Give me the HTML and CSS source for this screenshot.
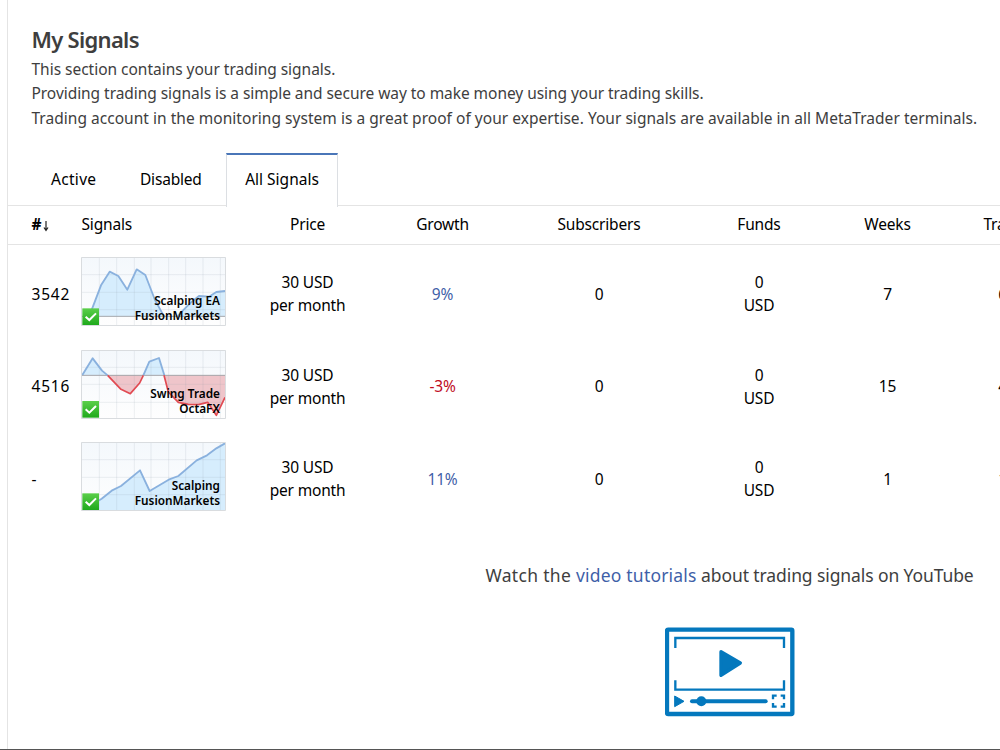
FILE: index.html
```
<!DOCTYPE html>
<html lang="en">
<head>
<meta charset="utf-8">
<title>My Signals</title>
<link rel="stylesheet" href="styles.css">
</head>
<body>
<main class="panel">
  <header class="intro">
    <h1 class="title">My Signals</h1>
    <p class="line l1">This section contains your trading signals.</p>
    <p class="line l2">Providing trading signals is a simple and secure way to make money using your trading skills.</p>
    <p class="line l3">Trading account in the monitoring system is a great proof of your expertise. Your signals are available in all MetaTrader terminals.</p>
  </header>
  <nav class="tabs">
    <a class="tab active-tab">Active</a>
    <a class="tab disabled-tab">Disabled</a>
    <a class="tab selected">All Signals</a>
  </nav>
  <section class="table">
    <div class="row head">
      <span class="left"><b>#</b><svg class="sort" viewBox="0 0 6 12"><path d="M3 1v9M1 7.500l2 3l2-3" fill="none" stroke="#222" stroke-width="1.200"/></svg></span>
      <span class="left">Signals</span><span>Price</span><span>Growth</span><span>Subscribers</span><span>Funds</span><span>Weeks</span><span>Trades</span>
    </div>
    <div class="row item">
      <span class="left rank">3542</span>
      <div class="thumb">
        <svg class="chart" viewBox="18 21 435 207">
          <defs>
            <linearGradient id="bg" x1="0" y1="0" x2="0" y2="1"><stop offset="0" stop-color="#f4f8fc"/><stop offset="1" stop-color="#fefefe"/></linearGradient>
            <linearGradient id="ok" x1="0" y1="0" x2="0" y2="1"><stop offset="0" stop-color="#5bcf4a"/><stop offset="1" stop-color="#1fa91c"/></linearGradient>
          </defs>
          <path d="M18 21h435v207H18z" fill="url(#bg)"/>
          <path d="M46 199V190L78 106L104 65L130 78L157 119L185 58L211 75L240 150L262 190V199H315V190L345 160L372 138L402 140L424 126L450 123V199Z" fill="#d6edfd"/>
          <path d="M73 21v207M125 21v207M178 21v207M228 21v207M281 21v207M332 21v207M384 21v207M436 21v207M18 74h435M18 127h435M18 179h435" stroke="#8e9aa6" stroke-opacity=".15" stroke-width="3"/>
          <path d="M18 199h435" stroke="#a4a8ac" stroke-width="3"/>
          <path d="M46 190L78 106L104 65L130 78L157 119L185 58L211 75L240 150L262 190L266 199M309 199L315 190L345 160L372 138L402 140L424 126L450 123" fill="none" stroke="#8ab1de" stroke-width="5.500" stroke-linejoin="round"/>
          <path d="M19.500 22.500h432v204h-432z" fill="none" stroke="#d9dcdf" stroke-width="3"/>
          <path d="M22 175h50v50H22z" fill="url(#ok)"/><path d="M32 200l11 10l20-20" fill="none" stroke="#fff" stroke-width="6"/>
        </svg>
        <div class="name"><span>Scalping EA</span><span>FusionMarkets</span></div>
      </div>
      <span>30 USD<br>per month</span><span class="up">9%</span><span>0</span><span>0<br>USD</span><span>7</span><span>61</span>
    </div>
    <div class="row item">
      <span class="left rank">4516</span>
      <div class="thumb lower">
        <svg class="chart" viewBox="18 24 435 207">
          <path d="M18 24h435v207H18z" fill="url(#bg)"/>
          <path d="M22 99L53 49L81 86L98 100ZM205 100L223 59L252 48L268 100Z" fill="#d6edfd"/>
          <path d="M98 100L138 142L166 155L194 123L205 100ZM267 100L280 150L310 181L340 187L370 188L398 181L424 220L450 166V100Z" fill="#efc5ca"/>
          <path d="M73 24v207M125 24v207M178 24v207M228 24v207M281 24v207M332 24v207M384 24v207M436 24v207M18 76h435M18 127h435M18 181h435" stroke="#8e9aa6" stroke-opacity=".15" stroke-width="3"/>
          <path d="M18 100h435" stroke="#a4a4a9" stroke-width="3"/>
          <path d="M22 99L53 49L81 86L98 100M205 100L223 59L252 48L268 100" fill="none" stroke="#8ab1de" stroke-width="5.500" stroke-linejoin="round"/>
          <path d="M98 100L138 142L166 155L194 123L205 100M267 100L280 150L310 181L340 187L370 188L398 181L424 220L450 166" fill="none" stroke="#e14a52" stroke-width="5" stroke-linejoin="round"/>
          <path d="M19.500 25.500h432v204h-432z" fill="none" stroke="#d9dcdf" stroke-width="3"/>
          <path d="M22 177h50v50H22z" fill="url(#ok)"/><path d="M32 202l11 10l20-20" fill="none" stroke="#fff" stroke-width="6"/>
        </svg>
        <div class="name"><span>Swing Trade</span><span>OctaFX</span></div>
      </div>
      <span>30 USD<br>per month</span><span class="down">-3%</span><span>0</span><span>0<br>USD</span><span>15</span><span>48</span>
    </div>
    <div class="row item">
      <span class="left rank">-</span>
      <div class="thumb">
        <svg class="chart" viewBox="18 21 435 207">
          <path d="M18 21h435v207H18z" fill="url(#bg)"/>
          <path d="M46 212L80 191L110 167L138 153L195 106L224 168L281 134L310 123L365 76L396 61L424 40L450 25V226H46Z" fill="#d6edfd"/>
          <path d="M73 21v207M125 21v207M178 21v207M228 21v207M281 21v207M332 21v207M384 21v207M436 21v207M18 74h435M18 127h435M18 179h435" stroke="#8e9aa6" stroke-opacity=".15" stroke-width="3"/>
          <path d="M46 212L80 191L110 167L138 153L195 106L224 168L281 134L310 123L365 76L396 61L424 40L450 25" fill="none" stroke="#8ab1de" stroke-width="5.500" stroke-linejoin="round"/>
          <path d="M19.500 22.500h432v204h-432z" fill="none" stroke="#d9dcdf" stroke-width="3"/>
          <path d="M22 175h50v50H22z" fill="url(#ok)"/><path d="M32 200l11 10l20-20" fill="none" stroke="#fff" stroke-width="6"/>
        </svg>
        <div class="name"><span>Scalping</span><span>FusionMarkets</span></div>
      </div>
      <span>30 USD<br>per month</span><span class="up">11%</span><span>0</span><span>0<br>USD</span><span>1</span><span>12</span>
    </div>
  </section>
  <footer class="video">
    <p class="watch"><span class="lead">Watch the </span><a class="link">video tutorials</a> about trading signals on YouTube</p>
    <svg class="player" viewBox="30 21 390 270" fill="#0478bd">
      <rect x="36" y="29" width="376" height="253" rx="3" fill="none" stroke="#0478bd" stroke-width="13"/>
      <path d="M61 84V54H387V84M61 181V209H387V181" fill="none" stroke="#0478bd" stroke-width="7"/>
      <path d="M198 95L256 129L198 166Z" stroke="#0478bd" stroke-width="10" stroke-linejoin="round"/>
      <path d="M59 228L87 244L59 260Z" stroke="#0478bd" stroke-width="3" stroke-linejoin="round"/>
      <path d="M111 244H332" stroke="#0478bd" stroke-width="12" stroke-linecap="round"/>
      <circle cx="139" cy="244" r="15"/>
      <path d="M354 238V227H365M377 227H387V238M387 249V260H377M365 260H354V249" fill="none" stroke="#0478bd" stroke-width="7"/>
    </svg>
  </footer>
</main>
</body>
</html>
```
FILE: styles.css
```
* { box-sizing: border-box; }
body {
  margin: 0;
  height: 750px;
  padding-left: 8px;
  overflow: hidden;
  background: #fff;
  border-bottom: 1px solid #555;
  color: #000;
  font: 15.500px/23px "Trebuchet MS", "Noto Sans", sans-serif;
}
.panel {
  width: 993px;
  height: 749px;
  margin-left: -1px;
  border-left: 1px solid #e4e4e4;
  display: flex;
  flex-direction: column;
}
.intro { height: 153px; padding: 25px 0 0 23.500px; color: #3e3e3e; }
.title { margin: 0 0 4px; font-size: 22px; line-height: 28px; font-weight: 600; letter-spacing: -.7px; }
.line { margin: 0; line-height: 24.400px; white-space: nowrap; }
.l1 { letter-spacing: -.02px; }
.l2 { letter-spacing: -.05px; }
.l3 { letter-spacing: .03px; }
.tabs { display: flex; height: 52px; }
.tab { border-top: 2px solid transparent; line-height: 49px; white-space: nowrap; }
.active-tab { width: 107px; padding-left: 43px; letter-spacing: .3px; }
.disabled-tab { width: 111px; padding-left: 25px; letter-spacing: -.2px; }
.selected {
  width: 112px;
  height: 54px;
  position: relative;
  z-index: 1;
  text-align: center;
  background: #fff;
  border: 1px solid #dcdfe3;
  border-top: 2px solid #4a76b8;
  border-bottom: 0;
}
.table { border-top: 1px solid #e4e4e4; overflow: hidden; }
.row {
  display: grid;
  grid-template-columns: 50px 145px 163px 107px 206px 114px 143px 96px;
  padding-left: 23px;
  align-items: center;
  text-align: center;
  white-space: nowrap;
  letter-spacing: -.18px;
}
.head { height: 39px; border-bottom: 1px solid #e4e4e4; margin-bottom: 3px; padding-bottom: 1px; }
.head .left { padding-left: .5px; }
.item { height: 92.500px; }
.left { text-align: left; }
.rank { letter-spacing: .8px; padding-left: .5px; }
.sort { width: 6px; height: 12px; margin-left: 2px; vertical-align: -2px; }
.up { color: #3f5fa8; }
.down { color: #c00d1e; }
.thumb { display: grid; width: 145px; height: 69px; margin-bottom: 6px; }
.lower { margin-bottom: 4.500px; }
.chart { grid-area: 1 / 1; width: 145px; height: 69px; }
.name {
  grid-area: 1 / 1;
  z-index: 1;
  display: flex;
  flex-direction: column;
  align-items: flex-end;
  justify-content: flex-end;
  padding: 0 6px 3px 0;
  font-size: 11.800px;
  line-height: 15px;
  font-weight: 600;
  letter-spacing: 0;
}
.video { display: flex; flex-direction: column; align-items: center; width: 1443px; padding-top: 37px; }
.watch { margin: 0 0 40px; font-size: 17.500px; line-height: 24px; letter-spacing: -.1px; color: #3e3e3e; white-space: nowrap; }
.lead { letter-spacing: .32px; }
.link { color: #3f5fa8; letter-spacing: .2px; }
.player { width: 130px; height: 90px; }
```
